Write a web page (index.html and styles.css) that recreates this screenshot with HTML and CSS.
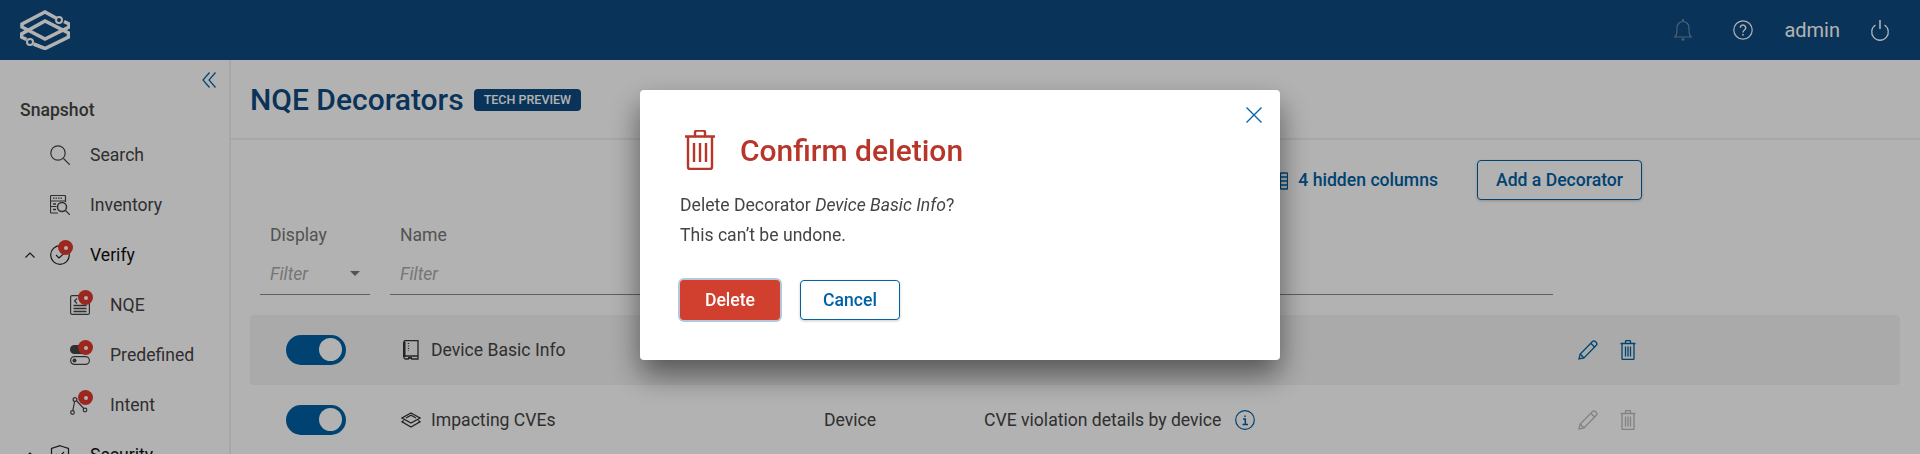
FILE: index.html
```html
<!DOCTYPE html>
<html lang="en">
<head>
<meta charset="utf-8">
<title>NQE Decorators</title>
<link rel="stylesheet" href="styles.css">
</head>
<body>
<div class="app">
  <header class="topbar">
    <svg class="logo" width="50" height="40" viewBox="20 10 50 40" fill="none" stroke="#fff" stroke-width="3.600">
      <path d="M56 18L45 12 22 24v3L45 39 69 27v-3l-5-2.500"/>
      <path d="M33.500 44L45 48.500 68.500 37v-4L45 21 21.500 34v3l5 2.500"/>
      <circle cx="59" cy="20" r="3" stroke-width="2"/>
      <circle cx="30" cy="42" r="3" stroke-width="2"/>
    </svg>
    <div class="topbar-right">
      <svg class="bell" width="20" height="24" viewBox="0 0 20 24" fill="none" stroke="#6f8ba5" stroke-width="1.200">
        <path d="M2 19h16c-1.500-1.500-2-3-2-6V9.500A6 6 0 0 0 10 3.500a6 6 0 0 0-6 6V13c0 3-.5 4.500-2 6z"/>
        <path d="M10 1v2.500M8.500 21.500h3" stroke-width="1.800"/>
      </svg>
      <svg class="help" width="20" height="20" viewBox="0 0 20 20" fill="none" stroke="#fff" stroke-width="1.200">
        <circle cx="10" cy="10" r="9.200"/>
        <path d="M7.300 7.800a2.700 2.700 0 1 1 4.200 2.200c-1 .7-1.500 1.200-1.500 2.400" stroke-width="1.500"/>
        <path d="M10 14v1.600" stroke-width="1.600"/>
      </svg>
      <span class="user">admin</span>
      <svg class="power" width="20" height="22" viewBox="0 0 20 22" fill="none" stroke="#fff" stroke-width="1.300">
        <path d="M5.500 6a8.300 8.300 0 1 0 9 0"/>
        <path d="M10 1v9" stroke-width="1.600"/>
      </svg>
    </div>
  </header>
  <div class="layout">
    <aside class="sidebar">
      <div class="collapse">
        <svg width="14" height="16" viewBox="0 0 14 16" fill="none" stroke="#0061a4" stroke-width="1.200"><path d="M7.500 .5L1 8l6.500 7.500M13.500 .5L7 8l6.500 7.500"/></svg>
      </div>
      <div class="nav-title">Snapshot</div>
      <nav class="nav">
        <a class="nav-item">
          <svg class="nav-icon" width="20" height="20" viewBox="0 0 20 20" fill="none" stroke="#444" stroke-width="1.200"><circle cx="8" cy="8" r="7.200"/><path d="M13.500 13.500L20 20"/></svg>
          <span>Search</span>
        </a>
        <a class="nav-item">
          <svg class="nav-icon" width="20" height="20" viewBox="0 0 20 20" fill="none" stroke="#444" stroke-width="1.200"><path d="M8 18H1.500a1 1 0 0 1-1-1V1.500a1 1 0 0 1 1-1h13a1 1 0 0 1 1 1V7M.5 6h15M.5 11.500h6"/><path d="M3 3.200h10" stroke-dasharray="1.500 1"/><path d="M3 9h3M3 14.500h3" stroke-width="1.600"/><circle cx="12" cy="12" r="4.500" stroke-width="1.500"/><path d="M15.500 15.500L20 20"/></svg>
          <span>Inventory</span>
        </a>
        <a class="nav-item nav-parent">
          <svg class="caret" width="10" height="6" viewBox="0 0 10 6" fill="none" stroke="#222" stroke-width="1.200"><path d="M.5 5.500L5 1l4.500 4.500"/></svg>
          <span class="icon-wrap">
            <svg class="nav-icon" width="20" height="20" viewBox="0 0 20 20" fill="none" stroke="#222" stroke-width="1.200"><circle cx="10" cy="10" r="9.300"/><path d="M6 10l3 3 5.500-5"/></svg>
            <i class="dot"></i>
          </span>
          <span>Verify</span>
        </a>
        <a class="nav-item nav-sub">
          <span class="icon-wrap">
            <svg class="nav-icon" width="20" height="20" viewBox="0 0 20 20" fill="none" stroke="#444" stroke-width="1.200"><rect x=".6" y=".6" width="18.800" height="18.800" rx="1.500"/><path d="M7 3.500L4.500 6 7 8.500"/><path d="M3.500 10.500h13M3.500 13.500h13M3.500 16.500h13" stroke-width="1.300"/></svg>
            <i class="dot"></i>
          </span>
          <span>NQE</span>
        </a>
        <a class="nav-item nav-sub">
          <span class="icon-wrap">
            <svg class="nav-icon" width="20" height="20" viewBox="0 0 20 20" fill="none" stroke="#444" stroke-width="1.200"><rect x="0" y="0" width="16" height="9" rx="4.500" fill="#444" stroke="none"/><rect x=".6" y="11.600" width="18.800" height="7.800" rx="3.900"/><circle cx="4.500" cy="15.500" r="2" fill="#444" stroke="none"/></svg>
            <i class="dot"></i>
          </span>
          <span>Predefined</span>
        </a>
        <a class="nav-item nav-sub">
          <span class="icon-wrap">
            <svg class="nav-icon" width="20" height="20" viewBox="0 0 20 20" fill="none" stroke="#444" stroke-width="1.200"><path d="M4.600 6.500L2.800 15.800M6.400 5.500L13.700 13.500"/><circle cx="5" cy="4.500" r="1.900"/><circle cx="2.500" cy="17.500" r="1.800"/><circle cx="15" cy="15" r="1.800"/></svg>
            <i class="dot"></i>
          </span>
          <span>Intent</span>
        </a>
        <a class="nav-item nav-parent">
          <svg class="caret" width="10" height="6" viewBox="0 0 10 6" fill="none" stroke="#222" stroke-width="1.200"><path d="M.5 5.500L5 1l4.500 4.500"/></svg>
          <span class="icon-wrap">
            <svg class="nav-icon" width="20" height="20" viewBox="0 0 20 20" fill="none" stroke="#222" stroke-width="1.200"><path d="M10 .7L18.500 3.500v7c0 4-4 7-8.500 9-4.500-2-8.500-5-8.500-9v-7z"/><path d="M6 9l3 3 5-5"/></svg>
          </span>
          <span>Security</span>
        </a>
      </nav>
    </aside>
    <main class="content">
      <div class="page-head">
        <h1 class="page-title">NQE Decorators</h1>
        <span class="badge">TECH PREVIEW</span>
      </div>
      <div class="toolbar">
        <a class="hidden-cols">
          <svg width="12" height="20" viewBox="0 0 12 20" fill="none" stroke="#0061a4" stroke-width="1.300"><rect x="4.500" y="3" width="7" height="16" rx=".5"/><path d="M4.500 7h7M4.500 11h7M4.500 15h7M1 1v18" /></svg>
          <span>4 hidden columns</span>
        </a>
        <button class="btn btn-outline btn-add">Add a Decorator</button>
      </div>
      <div class="filters">
        <div class="filter filter-display">
          <label class="filter-label">Display</label>
          <div class="filter-input"><span>Filter</span><i class="tri"></i></div>
        </div>
        <div class="filter filter-name">
          <label class="filter-label">Name</label>
          <div class="filter-input"><span>Filter</span></div>
        </div>
      </div>
      <div class="row row-hover">
        <span class="toggle"></span>
        <span class="name">
          <svg width="16" height="20" viewBox="0 0 16 20" fill="none" stroke="#333" stroke-width="1.300"><path d="M1 16V2a1.500 1.500 0 0 1 1.500-1.500H15V16H2.500A1.500 1.500 0 0 0 1 17.500v0A1.500 1.500 0 0 0 2.500 19H5M9 19h6v-3" /><path d="M1 2v15" stroke-width="3"/><path d="M5 17v3l2-1.500L9 20v-3" fill="#333" stroke="none"/><path d="M5.500 3v8" stroke-dasharray="1 1.500"/></svg>
          Device Basic Info
        </span>
        <span>Device</span>
        <span class="desc">Basic device information</span>
        <span class="actions">
          <svg width="22" height="20" viewBox="0 0 22 20" fill="none" stroke="#0061a4" stroke-width="1.300"><path d="M1 19l1.200-5L14.500 1.500a2 2 0 0 1 2.800 0l1 1a2 2 0 0 1 0 2.800L6 18z"/><path d="M2.200 14L6 18M13 3.500l3.800 3.800"/></svg>
          <svg width="16" height="20" viewBox="0 0 16 20" fill="none" stroke="#0061a4" stroke-width="1.300"><path d="M.5 3.500h15M5.500 3.500v-2a1 1 0 0 1 1-1h3a1 1 0 0 1 1 1v2M2 3.500v15a1 1 0 0 0 1 1h10a1 1 0 0 0 1-1v-15M5.500 6.500v10M8 6.500v10M10.500 6.500v10"/></svg>
        </span>
      </div>
      <div class="row">
        <span class="toggle"></span>
        <span class="name">
          <svg class="layers" width="20" height="16" viewBox="0 0 20 16" fill="none" stroke="#333" stroke-width="1.300"><path d="M10 1L19 6 10 11 1 6zM2.800 8.500L1 9.800 10 15l9-5.200-1.800-1.300"/><path d="M5 6l5-2.800L15 6"/></svg>
          Impacting CVEs
        </span>
        <span>Device</span>
        <span class="desc">CVE violation details by device
          <svg width="20" height="20" viewBox="0 0 20 20" fill="none" stroke="#0061a4" stroke-width="1.200"><circle cx="10" cy="10" r="9.300"/><path d="M8 9h2.300v5.500M7.500 14.500h5.500M10 5.500v1.500" stroke-width="1.500"/></svg>
        </span>
        <span class="actions actions-off">
          <svg width="22" height="20" viewBox="0 0 22 20" fill="none" stroke="#bbb" stroke-width="1.300"><path d="M1 19l1.200-5L14.500 1.500a2 2 0 0 1 2.800 0l1 1a2 2 0 0 1 0 2.800L6 18z"/><path d="M2.200 14L6 18M13 3.500l3.800 3.800"/></svg>
          <svg width="16" height="20" viewBox="0 0 16 20" fill="none" stroke="#bbb" stroke-width="1.300"><path d="M.5 3.500h15M5.500 3.500v-2a1 1 0 0 1 1-1h3a1 1 0 0 1 1 1v2M2 3.500v15a1 1 0 0 0 1 1h10a1 1 0 0 0 1-1v-15M5.500 6.500v10M8 6.500v10M10.500 6.500v10"/></svg>
        </span>
      </div>
    </main>
  </div>
</div>
<div class="overlay">
  <div class="modal">
    <button class="close" aria-label="Close">
      <svg width="16" height="16" viewBox="0 0 16 16" fill="none" stroke="#0061a4" stroke-width="1.300"><path d="M.5 .5l15 15M15.500 .5l-15 15"/></svg>
    </button>
    <div class="modal-head">
      <svg width="30" height="40" viewBox="0 0 30 40" fill="none" stroke="#b8352a" stroke-width="2.400"><path d="M0 6.500h30M10 6.500V2.500a2 2 0 0 1 2-2h6a2 2 0 0 1 2 2v4M3 6.500V37a2 2 0 0 0 2 2h20a2 2 0 0 0 2-2V6.500M9 13v19M15 13v19M21 13v19"/></svg>
      <h2 class="modal-title">Confirm deletion</h2>
    </div>
    <div class="modal-body">
      <p>Delete Decorator <em>Device Basic Info</em>?</p>
      <p>This can’t be undone.</p>
    </div>
    <div class="modal-actions">
      <button class="btn btn-danger">Delete</button>
      <button class="btn btn-outline btn-cancel">Cancel</button>
    </div>
  </div>
</div>
</body>
</html>
```

FILE: styles.css
```css
* { box-sizing: border-box; }
html, body { margin: 0; height: 454px; overflow: hidden; }
body { font-family: Roboto, "Liberation Sans", sans-serif; font-size: 17.6px; color: #444; background: #fff; }
p, h1, h2 { margin: 0; }
svg { display: block; flex: none; }

.app { height: 454px; overflow: hidden; display: flex; flex-direction: column; }

.topbar { flex: none; height: 60px; background: #0d4980; display: flex; align-items: center; justify-content: space-between; padding: 0 30px 0 20px; }
.topbar-right { display: flex; align-items: center; color: #fff; }
.bell { margin-right: 40px; }
.help { margin-right: 31px; }
.user { font-size: 20px; margin-right: 30px; }

.layout { flex: 1; display: flex; min-height: 0; }

.sidebar { flex: none; width: 231px; border-right: 2px solid #f0f0f0; overflow: hidden; }
.collapse { display: flex; justify-content: flex-end; padding: 12px 13px 0 0; height: 35px; }
.nav-title { height: 30px; line-height: 30px; padding-left: 20px; margin-bottom: 5px; color: #444; font-weight: 500; }
.nav { display: flex; flex-direction: column; }
.nav-item { flex: none; height: 50px; display: flex; align-items: center; gap: 20px; padding-left: 50px; position: relative; }
.nav-parent { color: #111; }
.nav-sub { padding-left: 70px; }
.caret { position: absolute; left: 25px; top: 22px; }
.icon-wrap { position: relative; display: block; width: 20px; }
.dot { position: absolute; right: -3px; top: -5px; width: 15px; height: 15px; border-radius: 50%; background: #e0382c; }
.dot::after { content: ""; position: absolute; left: 5.5px; top: 5.5px; width: 4px; height: 4px; border-radius: 50%; background: #fff; }

.content { flex: 1; min-width: 0; }
.page-head { height: 80px; border-bottom: 2px solid #efefef; display: flex; align-items: center; gap: 10px; padding-left: 19px; }
.page-title { font-size: 30px; font-weight: 500; color: #0d4980; }
.badge { background: #0d4980; color: #fff; font-size: 12.500px; font-weight: 500; height: 22px; line-height: 22px; padding: 0 10px; border-radius: 4px; margin-top: 2px; }

.toolbar { height: 40px; margin-top: 20px; display: flex; justify-content: flex-end; align-items: center; padding-right: 278px; }
.hidden-cols { display: flex; align-items: center; gap: 10px; color: #0061a4; font-weight: 500; margin-right: 39px; }
.btn { font-family: inherit; font-size: 17.600px; font-weight: 500; height: 40px; border-radius: 4px; cursor: pointer; }
.btn-outline { background: #fff; border: 1px solid #0061a4; color: #0061a4; box-shadow: 0 1px 3px rgba(0,0,0,.2); }
.btn-add { width: 165px; padding: 0; }

.filters { display: flex; gap: 20px; padding-left: 29px; margin-top: 20px; }
.filter-label { display: block; padding-left: 10px; height: 30px; line-height: 30px; color: #777; }
.filter-input { height: 45px; padding: 3px 10px 0; display: flex; align-items: center; justify-content: space-between; border-bottom: 1px solid #888; color: #aaa; font-style: italic; }
.filter-display { width: 110px; }
.filter-name { width: 1163px; }
.tri { width: 0; height: 0; border-left: 5px solid transparent; border-right: 5px solid transparent; border-top: 5px solid #777; }

.row { height: 70px; margin: 0 20px 0 19px; display: grid; grid-template-columns: 153px 421px 160px 594px 1fr; align-items: center; border-radius: 4px; color: #444; }
.filters + .row { margin-top: 20px; }
.row-hover { background: #f4f4f4; }
.toggle { display: block; width: 60px; height: 30px; border-radius: 15px; background: #0061a4; margin-left: 36px; position: relative; }
.toggle::after { content: ""; position: absolute; right: 4px; top: 3px; width: 23px; height: 23px; border-radius: 50%; background: #fff; }
.name { display: flex; align-items: center; gap: 12px; }
.layers { margin-left: -2px; margin-right: -2px; }
.desc { display: flex; align-items: center; gap: 14px; }
.actions { display: flex; align-items: center; gap: 20px; }

.overlay { position: fixed; inset: 0; background: rgba(0,0,0,.3); display: flex; justify-content: center; align-items: flex-start; padding-top: 90px; }
.modal { position: relative; width: 640px; height: 270px; background: #fff; border-radius: 4px; padding: 40px; box-shadow: 0 15px 30px rgba(0,0,0,.5); }
.close { position: absolute; top: 17px; right: 18px; padding: 0; border: 0; background: none; cursor: pointer; }
.modal-head { display: flex; align-items: center; gap: 25px; padding-left: 5px; height: 40px; }
.modal-title { font-size: 30px; font-weight: 500; color: #b8352a; }
.modal-body { margin-top: 20px; line-height: 30px; color: #444; }
.modal-actions { display: flex; gap: 20px; margin-top: 30px; }
.btn-danger { width: 100px; padding: 0; background: #d13f2f; border: 0; color: #fff; box-shadow: 0 0 0 2px #b3c8da; }
.btn-cancel { width: 100px; padding: 0; }
```
